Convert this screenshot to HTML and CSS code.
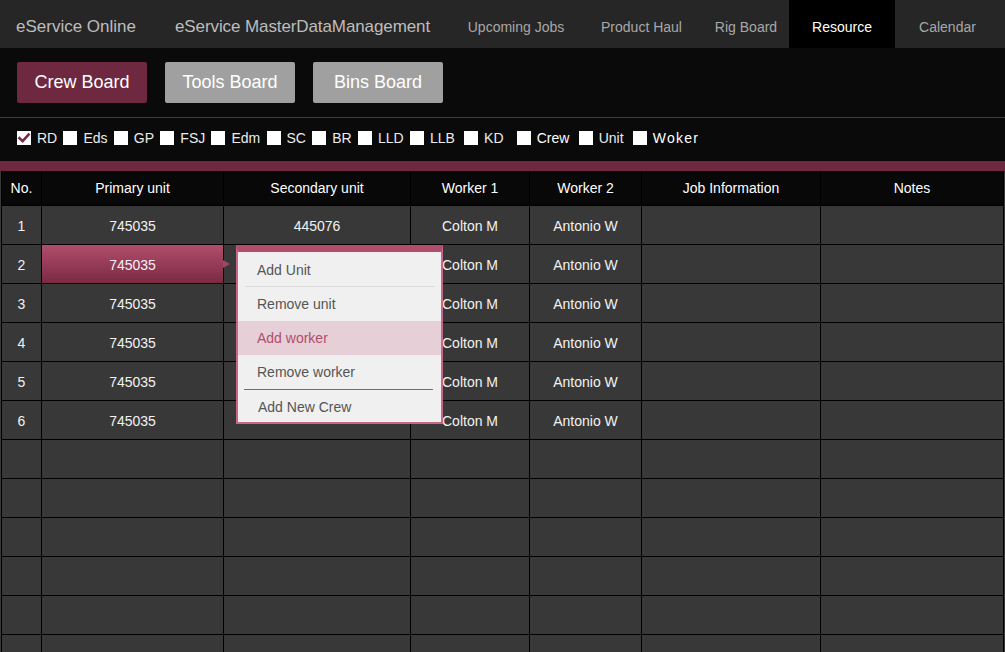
FILE: index.html
```html
<!DOCTYPE html>
<html lang="en">
<head>
<meta charset="utf-8">
<title>eService Online - Crew Board</title>
<link rel="stylesheet" href="styles.css">
</head>
<body>
<header class="topnav">
  <div class="brand">
    <span class="brand-item">eService Online</span>
    <span class="brand-item brand-second">eService MasterDataManagement</span>
  </div>
  <nav class="tabs">
    <a class="tab tab-upcoming">Upcoming Jobs</a>
    <a class="tab tab-haul">Product Haul</a>
    <a class="tab tab-rig">Rig Board</a>
    <a class="tab tab-resource active">Resource</a>
    <a class="tab tab-calendar">Calendar</a>
  </nav>
</header>

<section class="boards">
  <button class="board-btn active">Crew Board</button>
  <button class="board-btn">Tools Board</button>
  <button class="board-btn">Bins Board</button>
</section>

<section class="filters">
  <label class="filter"><span class="box checked"><svg viewBox="0 0 14 14" width="14" height="14"><path d="M2.5 7.2 L5.6 10.2 L11.6 3.6" fill="none" stroke="#7a2a44" stroke-width="2.6" stroke-linecap="square"/></svg></span><span class="flabel">RD</span></label>
  <label class="filter"><span class="box"></span><span class="flabel">Eds</span></label>
  <label class="filter"><span class="box"></span><span class="flabel">GP</span></label>
  <label class="filter"><span class="box"></span><span class="flabel">FSJ</span></label>
  <label class="filter"><span class="box"></span><span class="flabel">Edm</span></label>
  <label class="filter"><span class="box"></span><span class="flabel">SC</span></label>
  <label class="filter"><span class="box"></span><span class="flabel">BR</span></label>
  <label class="filter"><span class="box"></span><span class="flabel">LLD</span></label>
  <label class="filter"><span class="box"></span><span class="flabel">LLB</span></label>
  <label class="filter wide"><span class="box"></span><span class="flabel">KD</span></label>
  <label class="filter wider"><span class="box"></span><span class="flabel strong">Crew</span></label>
  <label class="filter wide"><span class="box"></span><span class="flabel">Unit</span></label>
  <label class="filter wide"><span class="box"></span><span class="flabel strong spaced">Woker</span></label>
</section>

<div class="accent-bar"></div>

<main class="board">
  <div class="grid">
    <div class="hcell">No.</div>
    <div class="hcell">Primary unit</div>
    <div class="hcell">Secondary unit</div>
    <div class="hcell">Worker 1</div>
    <div class="hcell">Worker 2</div>
    <div class="hcell">Job Information</div>
    <div class="hcell">Notes</div>

    <div class="cell">1</div><div class="cell">745035</div><div class="cell">445076</div><div class="cell">Colton M</div><div class="cell">Antonio W</div><div class="cell"></div><div class="cell"></div>
    <div class="cell">2</div><div class="cell selected">745035</div><div class="cell"></div><div class="cell">Colton M</div><div class="cell">Antonio W</div><div class="cell"></div><div class="cell"></div>
    <div class="cell">3</div><div class="cell">745035</div><div class="cell"></div><div class="cell">Colton M</div><div class="cell">Antonio W</div><div class="cell"></div><div class="cell"></div>
    <div class="cell">4</div><div class="cell">745035</div><div class="cell"></div><div class="cell">Colton M</div><div class="cell">Antonio W</div><div class="cell"></div><div class="cell"></div>
    <div class="cell">5</div><div class="cell">745035</div><div class="cell"></div><div class="cell">Colton M</div><div class="cell">Antonio W</div><div class="cell"></div><div class="cell"></div>
    <div class="cell">6</div><div class="cell">745035</div><div class="cell"></div><div class="cell">Colton M</div><div class="cell">Antonio W</div><div class="cell"></div><div class="cell"></div>

    <div class="cell"></div><div class="cell"></div><div class="cell"></div><div class="cell"></div><div class="cell"></div><div class="cell"></div><div class="cell"></div>
    <div class="cell"></div><div class="cell"></div><div class="cell"></div><div class="cell"></div><div class="cell"></div><div class="cell"></div><div class="cell"></div>
    <div class="cell"></div><div class="cell"></div><div class="cell"></div><div class="cell"></div><div class="cell"></div><div class="cell"></div><div class="cell"></div>
    <div class="cell"></div><div class="cell"></div><div class="cell"></div><div class="cell"></div><div class="cell"></div><div class="cell"></div><div class="cell"></div>
    <div class="cell"></div><div class="cell"></div><div class="cell"></div><div class="cell"></div><div class="cell"></div><div class="cell"></div><div class="cell"></div>
    <div class="cell"></div><div class="cell"></div><div class="cell"></div><div class="cell"></div><div class="cell"></div><div class="cell"></div><div class="cell"></div>
  </div>

  <ul class="context-menu">
    <li class="menu-item sep-light">Add Unit</li>
    <li class="menu-item">Remove unit</li>
    <li class="menu-item hover">Add worker</li>
    <li class="menu-item sep-accent">Remove worker</li>
    <li class="menu-item last">Add New Crew</li>
  </ul>
</main>
</body>
</html>
```

FILE: styles.css
```css
* { box-sizing: border-box; }

html, body {
  margin: 0;
  padding: 0;
}

body {
  width: 1005px;
  height: 652px;
  overflow: hidden;
  background: #0a0a0a;
  font-family: "Liberation Sans", Arial, sans-serif;
  color: #fff;
}

/* ---------- top navigation ---------- */
.topnav {
  display: flex;
  height: 48px;
  background: #262626;
}

.brand {
  display: flex;
  width: 452px;
  padding-left: 16px;
  gap: 39px;
}

.brand-item {
  font-size: 17px;
  line-height: 42px;
  padding-top: 6px;
  color: #bdbdbd;
  white-space: nowrap;
}

.brand-second {
  letter-spacing: -0.1px;
}

.tabs {
  display: flex;
}

.tab {
  display: block;
  height: 48px;
  padding-top: 7px;
  line-height: 41px;
  font-size: 14px;
  color: #a8a8a8;
  text-align: center;
  white-space: nowrap;
}

.tab-upcoming { width: 128px; }
.tab-haul { width: 123px; }
.tab-rig { width: 86px; }
.tab-resource { width: 106px; }
.tab-calendar { width: 105px; }

.tab.active {
  background: #000;
  color: #fff;
}

/* ---------- board buttons ---------- */
.boards {
  display: flex;
  gap: 18px;
  padding: 14px 0 14px 17px;
  border-bottom: 1px solid #3c3c3c;
}

.board-btn {
  width: 130px;
  height: 41px;
  border: 0;
  border-radius: 2px;
  background: #a0a0a0;
  color: #fff;
  font-family: "Liberation Sans", Arial, sans-serif;
  font-size: 18px;
  padding: 0;
}

.board-btn.active {
  background: #6e2840;
}

/* ---------- filters ---------- */
.filters {
  display: flex;
  align-items: center;
  height: 43px;
  padding: 0 0 4px 17px;
}

.filter {
  display: flex;
  align-items: center;
  margin-right: 6.25px;
}

.filter.wide { margin-left: 3px; }
.filter.wider { margin-left: 7px; }

.box {
  display: block;
  width: 14px;
  height: 14px;
  background: #fff;
}

.box svg { display: block; }

.flabel {
  margin-left: 6px;
  font-size: 14px;
  color: #ececec;
}

.flabel.strong { color: #fff; }
.flabel.spaced { letter-spacing: 1.2px; }

.accent-bar {
  height: 10px;
  background: #6e2840;
}

/* ---------- grid board ---------- */
.board {
  position: relative;
  background: #383838;
}

.grid {
  display: grid;
  grid-template-columns: 39px 181px 186px 118px 111px 178px 182px;
  grid-template-rows: 34px;
  grid-auto-rows: 38px;
  gap: 1px;
  width: 1003px;
  margin-left: 1px;
  padding: 0 1px;
  background: #000;
}

.hcell,
.cell {
  display: flex;
  align-items: center;
  justify-content: center;
  font-size: 14px;
  white-space: nowrap;
}

.hcell {
  background: #080808;
  color: #fff;
}

.cell {
  padding-top: 2px;
  background: #383838;
  color: #f2f2f2;
}

.cell.selected {
  position: relative;
  background: linear-gradient(#b24d6c, #7a2a44);
}

.cell.selected::after {
  content: "";
  position: absolute;
  right: -7px;
  top: 15px;
  border-left: 7px solid #a44563;
  border-top: 4px solid transparent;
  border-bottom: 4px solid transparent;
}

/* ---------- context menu ---------- */
.context-menu {
  position: absolute;
  left: 236px;
  top: 74px;
  width: 207px;
  margin: 0;
  padding: 0;
  list-style: none;
  background: #f0f0f0;
  border: 2px solid #c8668a;
  border-top: 7px solid #b24d6c;
}

.menu-item {
  position: relative;
  height: 34px;
  padding-left: 19px;
  line-height: 34px;
  font-size: 14px;
  color: #555;
}

.menu-item.sep-light {
  height: 35px;
  line-height: 36px;
}

.menu-item.sep-light::after,
.menu-item.sep-accent::after {
  content: "";
  position: absolute;
  bottom: 0;
  height: 1px;
}

.menu-item.sep-light::after {
  left: 7px;
  right: 6px;
  background: #dcdcdc;
}

.menu-item.sep-accent {
  height: 35px;
  line-height: 34px;
}

.menu-item.sep-accent::after {
  left: 6px;
  right: 8px;
  background: #c04870;
}

.menu-item.hover {
  background: #e6cfd6;
  color: #b24d6c;
}

.menu-item.last {
  height: 32px;
  line-height: 34px;
  padding-left: 20px;
}
```
